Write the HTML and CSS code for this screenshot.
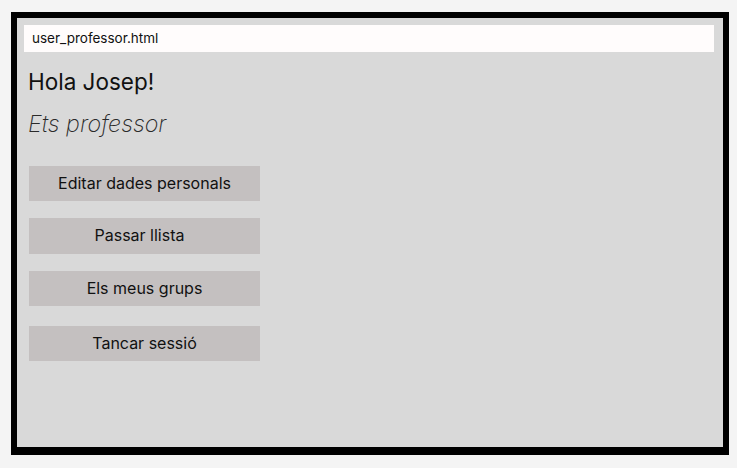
FILE: index.html
```html
<!DOCTYPE html>
<html lang="ca">
<head>
<meta charset="utf-8">
<title>user_professor.html</title>
<link rel="stylesheet" href="styles.css">
</head>
<body>
<div class="frame">
  <div class="urlbar">user_professor.html</div>
  <h1 class="greeting">Hola Josep!</h1>
  <p class="role">Ets professor</p>
  <div class="actions">
    <button class="btn btn-1">Editar dades personals</button>
    <button class="btn btn-2">Passar llista</button>
    <button class="btn btn-3">Els meus grups</button>
    <button class="btn btn-4">Tancar sessió</button>
  </div>
</div>
</body>
</html>
```
FILE: styles.css
```css
html, body {
  margin: 0;
  padding: 0;
}
body {
  background: #f4f4f4;
  padding: 12px 0 0 11px;
  font-family: Inter, "Noto Sans", sans-serif;
  color: #111;
}
.frame {
  box-sizing: border-box;
  width: 718px;
  height: 443px;
  background: #d9d9d9;
  border: 6px solid #000;
  border-bottom-width: 8px;
  padding: 7px 9px 0 7px;
}
.urlbar {
  box-sizing: border-box;
  height: 27px;
  background: #fffcfc;
  font-size: 13.5px;
  line-height: 27px;
  padding-left: 8px;
  color: #111;
}
.greeting {
  margin: 16px 0 0 4px;
  font-size: 22.5px;
  font-weight: 400;
  line-height: 28px;
}
.role {
  margin: 14px 0 0 4px;
  font-size: 23.3px;
  font-style: italic;
  font-weight: 200;
  line-height: 28px;
  color: #2a2a2a;
}
.actions {
  display: flex;
  flex-direction: column;
  align-items: flex-start;
  padding-left: 5px;
  margin-top: 28px;
}
.btn {
  width: 231px;
  height: 35px;
  border: 0;
  background: #c4c0c0;
  font-family: Inter, "Noto Sans", sans-serif;
  font-size: 16px;
  color: #111;
  padding: 0 0 2px;
}
.btn-2 { margin-top: 17px; height: 36px; padding-right: 10px; }
.btn-3 { margin-top: 17px; }
.btn-4 { margin-top: 20px; }
```
